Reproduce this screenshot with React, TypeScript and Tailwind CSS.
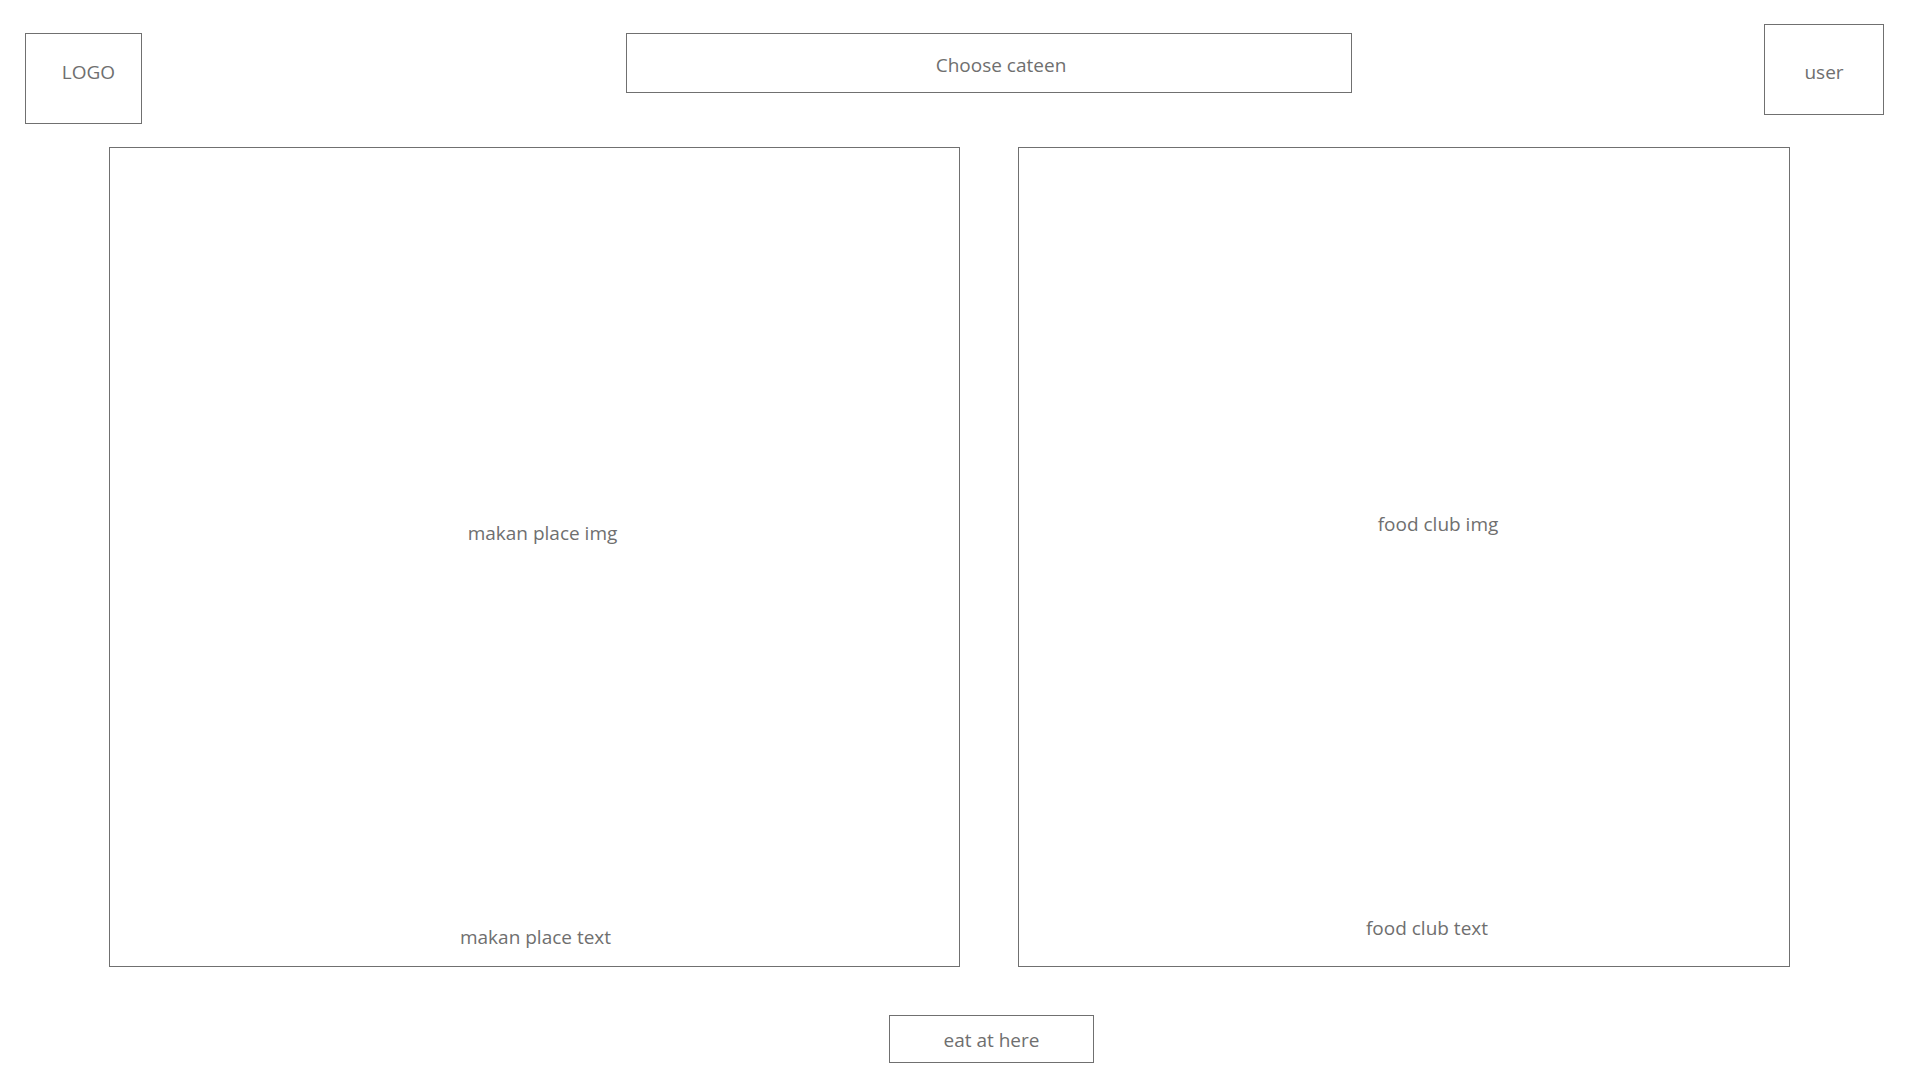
const Box = ({ className, children }: { className: string; children?: React.ReactNode }) => (
  <div className={`border border-[#707070] ${className}`}>{children}</div>
);

export default function App() {
  return (
    <div className="w-[1920px] h-[1080px] bg-white text-[#6f6f6f] text-[19px] leading-[28px] overflow-hidden font-['Open_Sans',sans-serif]">
      {/* header */}
      <div className="flex items-start h-[124px]">
        <Box className="ml-[25px] mt-[33px] w-[117px] h-[91px] flex justify-center pt-[24px] pl-[10px]">
          LOGO
        </Box>
        <Box className="ml-[484px] mt-[33px] w-[726px] h-[60px] flex justify-center pt-[17px] pl-[24px]">
          Choose cateen
        </Box>
        <Box className="ml-auto mr-[36px] mt-[24px] w-[120px] h-[91px] flex justify-center pt-[33px]">
          user
        </Box>
      </div>

      {/* canteens */}
      <div className="flex mt-[23px] pl-[109px] gap-[58px]">
        <Box className="w-[851px] h-[820px] flex flex-col">
          <div className="mt-[371px] flex justify-center pl-[16px]">makan place img</div>
          <div className="mt-[376px] flex justify-center pl-[2px]">makan place text</div>
        </Box>
        <Box className="w-[772px] h-[820px] flex flex-col">
          <div className="mt-[362px] flex justify-center pl-[68px]">food club img</div>
          <div className="mt-[376px] flex justify-center pl-[46px]">food club text</div>
        </Box>
      </div>

      <Box className="ml-[889px] mt-[48px] w-[205px] h-[48px] flex justify-center pt-[10px]">
        eat at here
      </Box>
    </div>
  );
}
